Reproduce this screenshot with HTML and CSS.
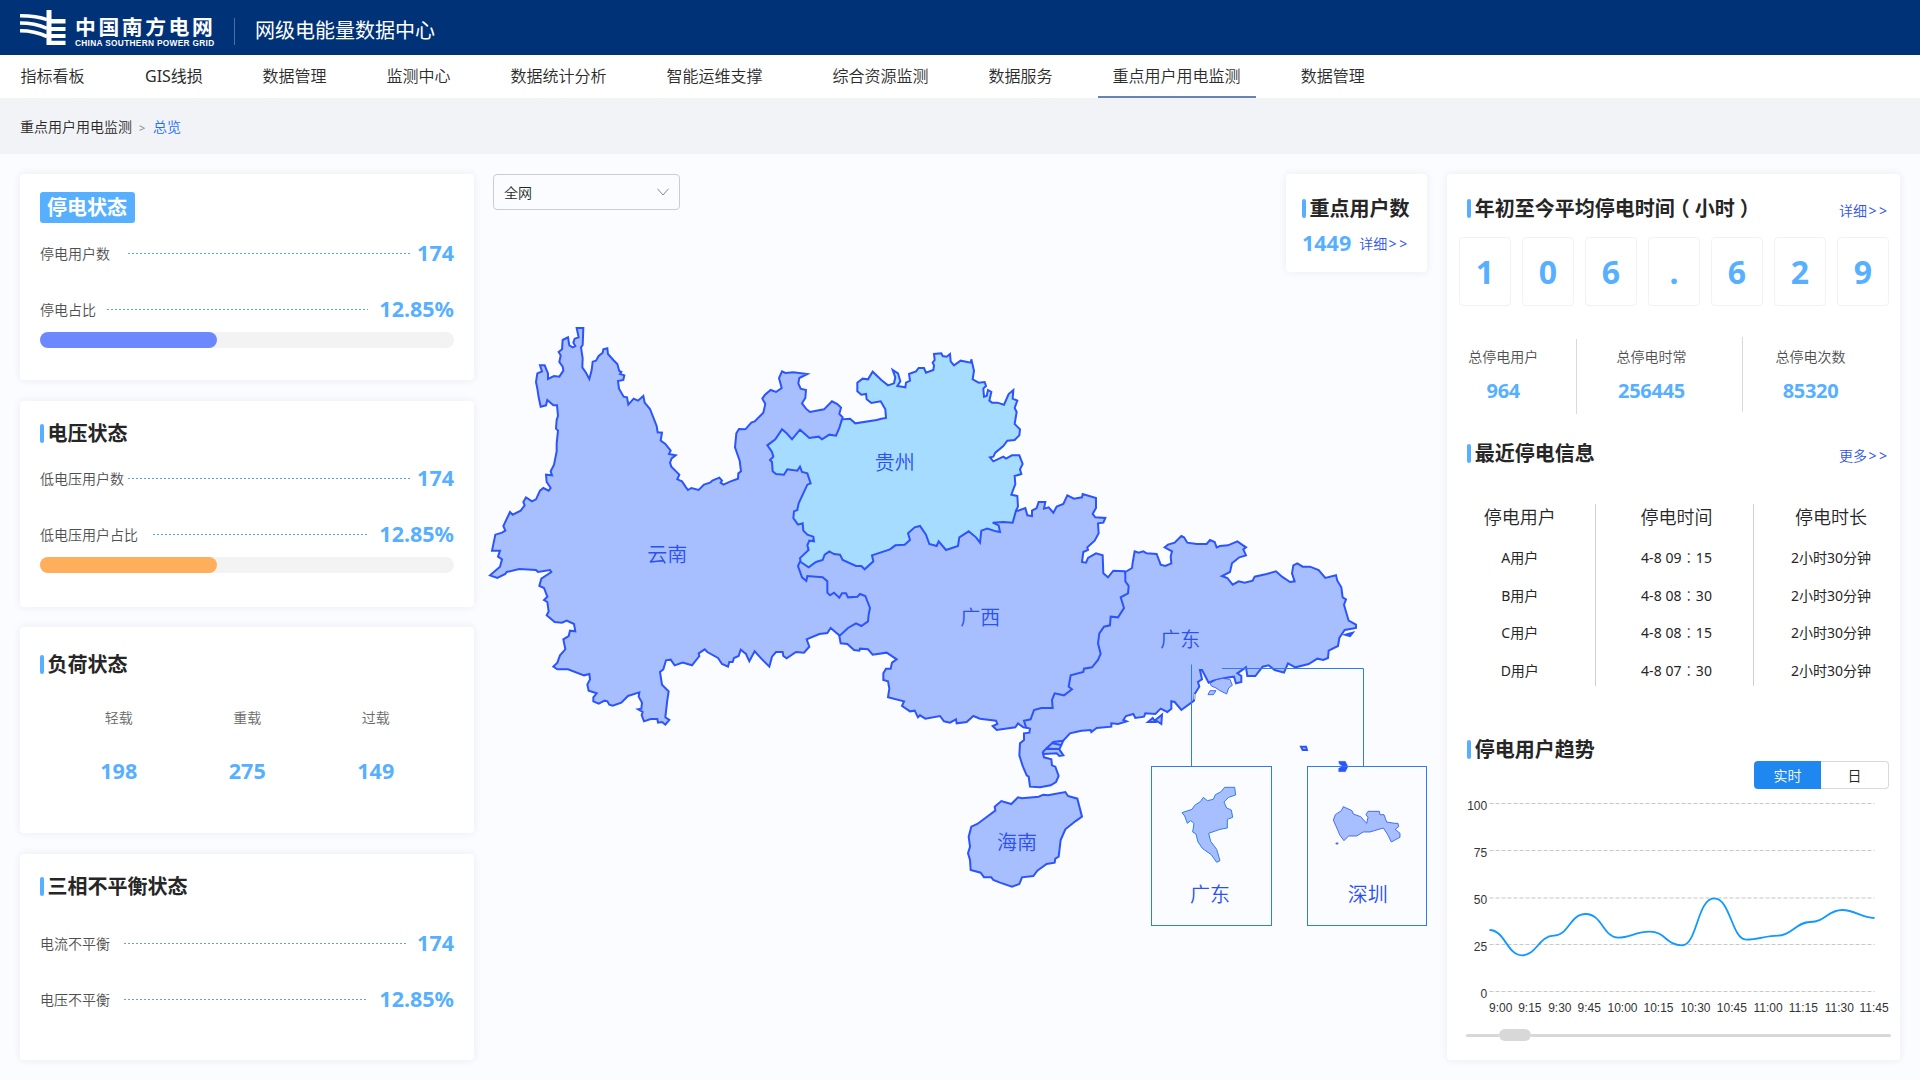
FILE: index.html
```html
<!DOCTYPE html>
<html lang="zh-CN">
<head>
<meta charset="utf-8">
<title>网级电能量数据中心</title>
<link rel="stylesheet" href="styles.css">
</head>
<body>
<header class="topbar">
  <svg class="logo" viewBox="0 0 46 36" width="46" height="36">
    <path fill="#fff" d="M26.500 0H31.500V9H45.500V13.500H31.500V17H45.500V21H31.500V24H45.500V28H31.500V30.800H45.500V35H26.500Z"/>
    <path fill="none" stroke="#fff" stroke-width="3.600" d="M0 5.700C10 5.700 19 6.500 27 9.700M0 13C10 13 19 14.800 27 18.300M0 20.700C10 20.700 19 22.700 27 26.500"/>
  </svg>
  <div class="brand">
    <div class="brand-cn">中国南方电网</div>
    <div class="brand-en">CHINA SOUTHERN POWER GRID</div>
  </div>
  <div class="topbar-title">网级电能量数据中心</div>
</header>

<nav class="nav">
  <a>指标看板</a>
  <a class="gis">GIS线损</a>
  <a>数据管理</a>
  <a>监测中心</a>
  <a>数据统计分析</a>
  <a class="wide">智能运维支撑</a>
  <a>综合资源监测</a>
  <a>数据服务</a>
  <a class="active">重点用户用电监测</a>
  <a>数据管理</a>
</nav>

<div class="crumbs"><span>重点用户用电监测</span><span class="sep">&gt;</span><span class="here">总览</span></div>

<main class="board">
  <section class="left">
    <div class="card">
      <h2 class="badge">停电状态</h2>
      <div class="row r1"><span class="label w88">停电用户数</span><i class="dots d282"></i><b>174</b></div>
      <div class="row r2"><span class="label w67">停电占比</span><i class="dots d261"></i><b>12.85%</b></div>
      <div class="bar"><div class="fill violet"></div></div>
    </div>
    <div class="card volt">
      <h2 class="title">电压状态</h2>
      <div class="row r1"><span class="label w88">低电压用户数</span><i class="dots d282"></i><b>174</b></div>
      <div class="row r2"><span class="label w113">低电压用户占比</span><i class="dots d215"></i><b>12.85%</b></div>
      <div class="bar"><div class="fill orange"></div></div>
    </div>
    <div class="card load">
      <h2 class="title">负荷状态</h2>
      <div class="loads">
        <div><span>轻载</span><b>198</b></div>
        <div><span>重载</span><b>275</b></div>
        <div><span>过载</span><b>149</b></div>
      </div>
    </div>
    <div class="card phase">
      <h2 class="title">三相不平衡状态</h2>
      <div class="row r1"><span class="label w84">电流不平衡</span><i class="dots d283"></i><b>174</b></div>
      <div class="row r2"><span class="label w84">电压不平衡</span><i class="dots d242"></i><b>12.85%</b></div>
    </div>
  </section>

  <section class="center">
    <div class="center-top">
      <div class="select"><span>全网</span>
        <svg width="12" height="8" viewBox="0 0 12 8" fill="none" stroke="#888"><path d="M.5 .8 6 7 11.500 .8"/></svg>
      </div>
      <div class="card users">
        <h2 class="title">重点用户数</h2>
        <div class="users-row"><b>1449</b><a class="more">详细<span>&gt;&gt;</span></a></div>
      </div>
    </div>
    <svg class="map" viewBox="480 272 960 788" width="960" height="788">
      <!-- 云南 -->
      <g class="area" transform="translate(480 310) scale(.33333)">
        <polygon points="290,54 310,54 308,105 303,112 308,145 307,172 318,188 328,207 335,180 338,155 348,152 356,138 368,128 370,118 382,115 384,132 400,150 412,162 418,183 424,186 420,192 433,196 430,210 414,213 417,236 431,260 441,262 445,284 461,266 474,272 490,258 494,278 510,297 530,348 533,367 546,368 542,392 556,402 572,422 567,432 587,436 575,445 570,458 574,470 598,494 592,508 606,514 618,532 624,540 634,534 656,540 672,524 690,518 697,512 718,503 726,512 722,518 730,524 752,514 774,506 775,490 783,484 779,452 765,412 769,370 777,357 796,358 814,338 824,334 850,308 856,282 847,266 855,254 872,240 888,246 905,234 897,204 906,184 916,189 940,187 982,192 958,204 955,220 962,236 978,240 976,264 966,280 978,296 990,306 1032,298 1056,274 1072,282 1083,293 1078,312 1088,322 1082,345 1120,440 1020,650 965,760 1200,810 1200,950 1078,976 1066,966 1052,954 1042,969 1018,972 980,988 988,1010 972,1028 948,1026 920,1045 910,1038 908,1026 888,1026 876,1040 868,1070 844,1046 824,1024 808,1054 798,1032 782,1019 776,1038 762,1044 758,1056 748,1056 744,1070 726,1062 714,1044 682,1026 674,1018 656,1030 658,1038 636,1066 608,1058 584,1066 572,1049 558,1051 550,1078 540,1086 546,1124 566,1144 562,1170 556,1222 568,1230 556,1244 546,1236 534,1238 532,1227 512,1227 492,1234 485,1216 488,1206 474,1198 484,1196 486,1178 476,1160 478,1147 444,1158 424,1178 398,1187 388,1184 382,1174 374,1172 356,1181 340,1174 340,1162 350,1150 326,1142 322,1124 330,1108 328,1092 312,1096 264,1078 232,1078 220,1070 232,1058 240,1036 256,1018 250,988 266,978 270,962 286,964 282,942 260,932 246,938 224,936 200,916 206,904 202,876 192,870 202,860 192,834 178,828 184,806 214,786 210,780 174,786 168,780 118,777 80,786 76,792 52,804 30,796 60,770 66,748 54,740 60,722 36,722 46,674 66,668 76,662 70,648 90,606 98,614 122,602 134,586 130,576 138,562 156,574 168,568 180,542 190,534 206,542 212,534 200,516 198,494 216,496 212,484 222,464 230,424 230,400 234,362 228,356 230,330 234,318 231,286 220,286 202,270 198,286 182,290 176,262 172,236 168,216 172,190 186,184 180,166 194,166 204,190 204,207 222,198 238,200 250,182 248,170 238,156 242,136 236,126 246,118 248,90 264,82 268,106 278,112 286,108 280,98 284,86 296,82"/>
      </g>
      <!-- 广西 -->
      <g class="area" transform="translate(780 480) scale(.33333)">
        <polygon points="60,245 200,150 600,100 714,92 736,84 742,106 756,108 756,92 770,84 776,66 796,66 792,86 806,82 820,98 830,80 850,72 862,46 882,56 906,52 908,42 948,54 948,84 938,102 946,112 976,114 970,128 954,130 956,160 944,182 922,202 924,210 910,216 906,246 918,248 924,234 948,220 968,226 970,280 984,292 1000,272 1034,274 1100,420 960,680 780,730 748,745 730,742 714,730 706,742 650,750 638,738 652,732 648,722 600,716 580,708 560,726 530,730 528,718 510,728 492,724 480,708 436,716 420,706 414,712 404,692 390,694 366,678 372,664 324,652 328,626 324,604 310,600 310,580 318,566 332,566 336,548 350,538 320,518 278,524 264,508 240,506 238,512 222,510 202,492 182,490 178,468 204,444 228,430 244,438 264,424 266,404 270,384 256,348 240,342 232,350 204,352 198,340 186,340 178,353 162,338 150,346 142,338 142,304 128,292 82,288 79,303 66,292 54,258"/>
      </g>
      <!-- 广东 -->
      <g class="area" transform="translate(1000 510) scale(.33333)">
        <polygon points="376,186 396,174 398,158 404,124 416,128 430,124 440,130 470,132 482,164 496,168 514,160 512,140 516,124 494,112 504,104 524,98 544,78 552,82 562,98 590,102 620,102 630,90 644,96 650,112 660,108 684,106 712,94 738,112 730,118 738,136 718,142 696,160 690,186 666,198 682,204 698,224 716,214 734,218 758,212 764,200 800,192 828,184 846,200 870,216 884,214 876,190 880,166 892,160 908,170 930,170 956,180 976,204 1008,196 1012,212 1024,232 1028,262 1038,268 1032,284 1046,332 1068,344 1068,354 1034,360 1018,384 1014,408 986,422 984,444 970,450 952,446 926,462 886,472 864,460 852,488 824,480 806,466 788,470 766,498 742,498 738,472 712,490 724,498 724,516 708,520 702,500 688,502 664,506 640,512 626,518 606,480 600,480 606,508 594,516 598,530 584,552 582,572 544,600 524,576 514,574 514,596 502,606 482,596 466,612 436,610 432,620 406,624 400,612 378,618 370,630 380,634 354,642 334,640 334,650 290,654 274,666 272,660 244,662 210,670 190,692 178,718 190,736 178,738 170,730 132,732 128,726 132,742 154,748 156,766 166,770 176,798 168,816 152,826 120,832 90,830 86,800 80,796 68,768 58,736 60,700 72,690 72,670 88,668 90,656 78,652 72,632 92,628 102,600 124,594 158,594 156,570 164,550 192,556 216,538 206,530 212,496 250,486 252,476 276,472 294,450 302,432 294,400 298,370 312,350 330,346 332,320 354,322 372,294 362,262 384,250 386,228 376,214"/>
        <path fill="none" d="M128 726 160 696 190 692M136 716 180 717M158 700 186 706"/>
        <path d="M444 636 458 624 466 636ZM466 630 486 614 484 642ZM1036 374 1058 368 1050 378ZM903 710 918 710 921 720 908 720Z"/>
        <path class="islet" d="M1016 754H1036L1044 770 1036 785H1016V775L1028 769 1018 762Z"/>
        <path class="thin" d="M630 520 650 509 668 505 690 508 697 526 686 534 680 552 660 542 648 534 634 528ZM624 554 630 542 648 542 640 554Z"/>
        <path class="sand" d="M584 552V568"/>
      </g>
      <!-- 贵州 -->
      <g class="area sky" transform="translate(720 340) scale(.33333)">
        <polygon points="186,268 200,280 216,298 240,269 268,294 296,290 306,298 328,284 348,287 358,264 366,238 390,236 406,250 470,240 484,236 498,234 496,208 482,184 454,189 440,178 438,162 424,164 412,154 412,128 428,116 444,118 458,95 484,120 504,136 522,130 526,112 518,90 534,100 541,124 532,138 556,142 558,128 570,122 567,102 588,94 596,84 612,84 618,98 640,90 642,76 638,68 644,60 642,42 664,40 668,48 680,50 690,42 692,64 702,76 722,62 752,68 754,58 762,92 758,118 776,128 794,126 798,138 790,146 792,170 800,168 804,150 814,156 808,182 816,188 832,188 852,194 866,162 880,150 878,176 892,182 884,204 890,216 884,252 900,268 898,286 884,300 862,302 850,318 826,338 820,350 810,352 820,364 850,350 858,356 876,346 898,346 908,372 900,388 904,402 884,408 886,432 874,464 892,468 894,500 888,512 878,548 850,546 818,548 836,556 840,576 828,574 802,566 784,572 780,608 768,592 746,574 718,592 714,618 678,630 656,604 650,618 628,612 618,584 600,558 584,562 564,580 570,600 554,614 526,616 510,628 456,646 460,664 434,688 424,678 408,678 368,660 360,644 342,642 328,634 314,644 308,660 288,666 266,682 242,666 240,654 266,630 262,616 268,602 282,604 280,590 262,584 250,572 248,550 234,554 220,534 222,514 232,510 236,490 262,434 272,430 262,400 246,396 240,380 232,392 202,388 192,404 168,402 158,394 156,366 150,360 160,350 156,336 142,316 166,298"/>
      </g>
      <!-- 海南与城市放大图 -->
      <g class="area" transform="translate(950 680) scale(.33333)">
        <polygon points="134,380 154,363 184,372 204,352 216,355 266,350 280,344 294,346 346,336 354,348 382,356 396,410 376,424 346,448 332,480 326,530 316,536 314,548 290,552 262,572 250,588 216,592 208,612 186,620 150,608 130,600 124,592 102,592 92,578 62,570 60,540 54,520 60,500 56,470 64,440 82,432 136,392"/>
        <polygon class="city" points="824,322 854,322 857,345 836,352 822,366 830,384 844,390 848,412 832,418 832,444 810,448 776,460 782,484 800,508 810,542 800,547 784,524 758,506 744,486 738,462 728,456 732,430 722,422 712,430 704,408 696,398 726,388 734,376 752,364 760,352 772,362 790,358 796,344 812,336"/>
        <path class="thin" d="M1180 380 1206 392 1210 402 1232 410 1250 430 1254 412 1248 404 1254 394 1288 394 1290 404 1302 404 1310 426 1334 430 1344 430 1346 440 1336 448 1350 460 1350 472 1324 486 1312 462 1300 444 1260 456 1240 456 1220 468 1196 468 1182 482 1170 466 1150 420 1156 404 1174 392ZM1158 489h6v3h-6Z"/>
      </g>
      <g class="frames">
        <path d="M1191.500 664.500V767M1222 668.500H1363.500V767"/>
        <rect x="1151.500" y="766.500" width="120" height="159"/>
        <rect x="1307.500" y="766.500" width="119" height="159"/>
      </g>
      <g class="names">
        <text x="667.300" y="561.500">云南</text>
        <text x="894.700" y="469.500">贵州</text>
        <text x="980.300" y="625">广西</text>
        <text x="1180.300" y="646.500">广东</text>
        <text x="1017" y="849.500">海南</text>
        <text x="1210" y="901.500">广东</text>
        <text x="1367.700" y="901.500">深圳</text>
      </g>
    </svg>
  </section>

  <section class="card right">
    <div class="head"><h2 class="title">年初至今平均停电时间<span class="open">（</span>小时<span class="close">）</span></h2><a class="more">详细<span>&gt;&gt;</span></a></div>
    <div class="digits"><b>1</b><b>0</b><b>6</b><b>.</b><b>6</b><b>2</b><b>9</b></div>
    <div class="totals">
      <div class="t1"><span>总停电用户</span><b>964</b></div>
      <div class="t2"><span>总停电时常</span><b>256445</b></div>
      <div class="t3"><span>总停电次数</span><b>85320</b></div>
    </div>
    <div class="head recent"><h2 class="title">最近停电信息</h2><a class="more">更多<span>&gt;&gt;</span></a></div>
    <div class="table">
      <div class="col c1"><strong>停电用户</strong><span>A用户</span><span>B用户</span><span>C用户</span><span>D用户</span></div>
      <div class="col c2"><strong>停电时间</strong><span>4-8 09<i>：</i>15</span><span>4-8 08<i>：</i>30</span><span>4-8 08<i>：</i>15</span><span>4-8 07<i>：</i>30</span></div>
      <div class="col c3"><strong>停电时长</strong><span>2小时30分钟</span><span>2小时30分钟</span><span>2小时30分钟</span><span>2小时30分钟</span></div>
    </div>
    <h2 class="title trend">停电用户趋势</h2>
    <div class="toggle"><span class="on">实时</span><span>日</span></div>
    <svg class="chart" viewBox="1446.500 789 453.500 236" width="453.500" height="236">
      <g class="grid">
        <path d="M1489 803.500H1874M1489 850.500H1874M1489 944.500H1874M1489 991.500H1874"/>
        <path class="soft" d="M1489 898H1874"/>
      </g>
      <path class="curve" transform="translate(1430 720) scale(.33333)" d="M177 630C223 630 230 706 274 706C318 706 326 647 370 647C414 647 418 582 466 582C514 582 520 653 562 653C600 653 614 635 658 635C706 635 706 676 755 676C800 676 800 535 851 535C900 535 904 659 947 659C985 659 1005 647 1043 647C1083 647 1097 606 1139 606C1185 606 1190 570 1235 570C1276 570 1290 594 1332 594"/>
      <g class="ylab"><text x="1486.700" y="810">100</text><text x="1486.700" y="857">75</text><text x="1486.700" y="904">50</text><text x="1486.700" y="951">25</text><text x="1486.700" y="998">0</text></g>
      <g class="xlab"><text x="1488.500" y="1012">9:00</text><text x="1517.700" y="1012">9:15</text><text x="1547.700" y="1012">9:30</text><text x="1577" y="1012">9:45</text><text x="1607" y="1012">10:00</text><text x="1643" y="1012">10:15</text><text x="1680" y="1012">10:30</text><text x="1716.300" y="1012">10:45</text><text x="1753" y="1012">11:00</text><text x="1788.300" y="1012">11:15</text><text x="1824.300" y="1012">11:30</text><text x="1859" y="1012">11:45</text></g>
    </svg>
    <div class="slider"><span class="track"></span><span class="thumb"></span><span class="track rest"></span></div>
  </section>
</main>
</body>
</html>
```
FILE: styles.css
```css
* { box-sizing: border-box; }
body {
  margin: 0;
  width: 1920px;
  height: 1080px;
  overflow: hidden;
  background: #fbfcff;
  font-family: "Noto Sans", "Noto Sans CJK SC", sans-serif;
  font-size: 14px;
  font-weight: 350;
  color: #262626;
}
h2, b, i { margin: 0; font-style: normal; }
b { font-weight: 700; }
svg { display: block; }

.topbar { height: 55px; background: #003278; color: #fff; display: flex; align-items: flex-start; padding-left: 20px; font-weight: 400; }
.logo { margin-top: 10px; }
.brand { margin: 16px 0 0 9px; width: 159px; height: 29px; }
.brand-cn { font-size: 20.800px; font-weight: 700; line-height: 23px; letter-spacing: 2.600px; white-space: nowrap; }
.brand-en { font: 700 8.300px/8px "Liberation Sans", sans-serif; white-space: nowrap; letter-spacing: .32px; }
.topbar-title { margin-top: 18px; height: 27px; line-height: 25px; border-left: 1px solid #4c70a1; padding-left: 20px; font-size: 20px; }

.nav { height: 43px; background: #fff; display: flex; padding-left: 5.500px; gap: 30px; font-size: 16px; line-height: 43px; color: #2b2b2b; }
.nav a { padding: 0 15px; height: 43px; white-space: nowrap; }
.nav .gis { width: 88px; padding-left: 15.500px; padding-right: 0; font-weight: 400; }
.nav .wide { margin-right: 10px; }
.nav .active { border-bottom: 2px solid #6683b3; }

.crumbs { height: 56px; background: #f2f3f7; display: flex; align-items: center; padding: 0 0 0 20px; color: #262626; }
.crumbs .sep { font-size: 11px; font-weight: 400; color: #888; margin: 2px 8px 0 7px; width: 6px; }
.crumbs .here { color: #1a6dff; }

.board { display: flex; gap: 6.500px; padding: 20px 20px 0; height: 906px; }
.card { background: #fff; border-radius: 4px; box-shadow: 0 0 8px rgba(30, 40, 70, .08); }
.left { width: 453.500px; display: flex; flex-direction: column; justify-content: space-between; }
.left .card { height: 206px; padding: 18px 19.500px 0 20px; }
.left .volt, .left .phase { padding-top: 17px; }
.left .load { padding-top: 22px; }

.badge { width: 95px; height: 31px; line-height: 32px; border-radius: 3px; background: #57b0ff; color: #fff; font-size: 20px; padding-left: 7px; }
.title { display: flex; align-items: center; height: 31px; line-height: 31px; font-size: 20px; font-weight: 700; white-space: nowrap; }
.title::before { content: ""; width: 4px; height: 19px; border-radius: 2px; background: #57b0ff; margin-right: 3.400px; }
.right .title::before { margin-right: 4.200px; }

.row { display: flex; align-items: center; height: 30px; color: #4f4f4f; }
.row b { margin-left: auto; }
.row b, .loads b, .users b { font-size: 21.500px; line-height: 28px; padding-bottom: 2px; color: #57b0ff; }
.r1 { margin-top: 16px; }
.volt .r1 { margin-top: 15px; }
.phase .r1 { margin-top: 27px; }
.r2 { margin-top: 26px; }
.label { white-space: nowrap; line-height: 18px; }
.w67 { width: 67px; } .w84 { width: 84px; } .w88 { width: 88px; } .w113 { width: 113px; }
.dots { height: 1px; margin-bottom: 1px; background: repeating-linear-gradient(90deg, #57a6e8 0 2px, transparent 2px 4px); }
.d215 { width: 215px; } .d242 { width: 242px; } .d261 { width: 261px; } .d282 { width: 282px; } .d283 { width: 283px; }
.bar { margin-top: 7px; height: 16px; border-radius: 8px; background: #f3f3f3; }
.fill { width: 177px; height: 16px; border-radius: 8px; }
.violet { background: #6b88ff; }
.orange { background: #ffae5c; }

.loads { display: flex; margin: 28px 0 0 14.500px; }
.loads div { width: 128.500px; display: flex; flex-direction: column; align-items: center; gap: 29px; }
.loads span { line-height: 20px; color: #6a6a6a; }

.center { width: 960px; }
.center-top { display: flex; justify-content: space-between; align-items: flex-start; padding: 0 13px; height: 98px; }
.select { width: 187px; height: 36px; margin-top: -.5px; border: 1px solid #ccc; border-radius: 4px; display: flex; align-items: center; justify-content: space-between; padding: 1px 10px 0 10px; }
.select svg { margin-bottom: 1px; }
.users { width: 141px; height: 98px; padding: 19px 0 0 16px; }
.users-row { display: flex; align-items: center; height: 30px; margin-top: 5px; }
.users-row .more { margin-left: 8px; padding-bottom: 1px; }
.more { color: #2f54eb; white-space: nowrap; line-height: 20px; }
.more span { font-weight: 400; letter-spacing: 2.600px; margin: 0 -2.600px 0 1.400px; }

.map { overflow: visible; }
.area { fill: #a7bfff; stroke: #2b54ff; stroke-width: 6; stroke-linejoin: miter; }
.sky { fill: #a6dcff; }
.area .city { stroke: #2d7cf0; stroke-width: 3; }
.area .thin { stroke-width: 2.500; }
.area .islet { fill: #2b54ff; stroke-width: 1; }
.area .sand { stroke: #c4c4cc; stroke-width: 6; }
.frames { fill: none; stroke: #2f7cf0; }
.names text { font-size: 20px; font-weight: 350; text-anchor: middle; fill: #2b50f5; }

.right { width: 453.500px; padding-top: 19px; display: flex; flex-direction: column; }
.head { display: flex; justify-content: space-between; align-items: center; padding: 0 13px 0 20px; height: 31px; }
.head .more { margin-top: 5px; }
.open { font-feature-settings: "halt"; margin: 0 5px; }
.close { margin-left: 5px; }
.digits { display: flex; gap: 11px; padding-left: 12.500px; margin-top: 13px; }
.digits b { width: 52px; height: 69px; border: 1px solid #f2f2f2; border-radius: 4px; text-align: center; font-size: 32px; line-height: 68px; color: #57b0ff; }
.totals { display: flex; margin-top: 31px; height: 77px; }
.totals div { display: flex; flex-direction: column; align-items: center; height: 75px; color: #4f4f4f; }
.totals span { line-height: 20px; margin-top: 10px; white-space: nowrap; }
.totals b { font-size: 20px; line-height: 28px; margin-top: 10px; color: #57b0ff; letter-spacing: -.3px; }
.totals .t1 { width: 130px; margin-top: 2px; border-right: 1px solid #d9d9d9; padding-right: 15.500px; }
.totals .t1 span { margin-top: 8px; }
.totals .t2 { width: 166px; border-right: 1px solid #d9d9d9; padding-right: 15px; }
.totals .t3 { width: 137px; padding-right: 1px; }
.recent { margin-top: 24px; }
.table { display: flex; margin-top: 35px; height: 182px; }
.col { display: flex; flex-direction: column; align-items: center; color: #262626; height: 182px; }
.col strong { font-weight: inherit; font-size: 18px; line-height: 27px; margin-bottom: 17px; }
.col span { font-weight: 400; line-height: 20px; margin-bottom: 17.500px; white-space: nowrap; }
.col i { font-family: "Noto Sans CJK TC", sans-serif; font-weight: 300; line-height: 1; }
.c1 { width: 149px; padding-right: 1.500px; border-right: 1px solid #d0d0d0; }
.c2 { width: 158px; padding-left: 5px; border-right: 1px solid #d0d0d0; }
.c2 span { letter-spacing: .1px; }
.c3 { width: 146px; padding-left: 9px; }
.trend { margin: 48px 0 0 20px; }
.toggle { display: flex; width: 135px; height: 28px; margin: -4px 0 0 307.500px; line-height: 28px; text-align: center; font-size: 14px; }
.toggle span { width: 68px; border: 1px solid #d9d9d9; border-left: 0; border-radius: 0 4px 4px 0; }
.toggle .on { width: 67px; background: #1e87f0; border: 0; color: #fff; border-radius: 4px 0 0 4px; line-height: 29px; }
.grid { fill: none; stroke: #c8c8c8; stroke-dasharray: 4 2; }
.grid .soft { stroke: #e2e2e2; stroke-width: 2; }
.curve { fill: none; stroke: #1299ff; stroke-width: 5.500; }
.ylab, .xlab { font: 12px "Liberation Sans", sans-serif; fill: #333; }
.ylab { text-anchor: end; }
.slider { display: flex; align-items: center; height: 12px; margin: 4px 0 0 19px; }
.track { width: 33px; height: 3px; border-radius: 2px 0 0 2px; background: #d8d8d8; }
.thumb { width: 32px; height: 12px; border-radius: 6px; background: #d8d8d8; }
.rest { width: 360px; border-radius: 0 2px 2px 0; }
```
